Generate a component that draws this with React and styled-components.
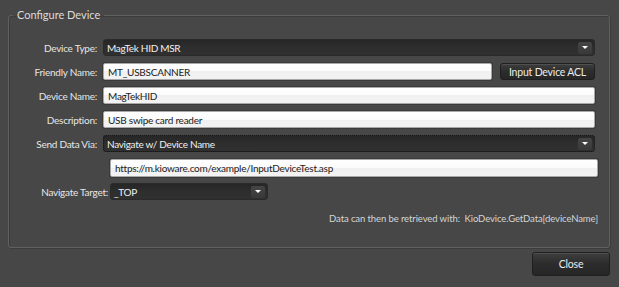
import styled, { createGlobalStyle } from "styled-components";

const GlobalStyle = createGlobalStyle`
  html, body {
    margin: 0;
    padding: 0;
    background: #474747;
  }
  body {
    width: 619px;
    height: 287px;
    overflow: hidden;
    font-family: Lato, "Open Sans", "Liberation Sans", sans-serif;
  }
`;

export default function App() {
  return (
    <Page>
      <GlobalStyle />
      <Group>
        <Title>Configure Device</Title>

        <Row>
          <Label>Device Type:</Label>
          <Select>
            <span>MagTek HID MSR</span>
            <Arrow />
          </Select>
        </Row>

        <Row>
          <Label>Friendly Name:</Label>
          <Input>MT_USBSCANNER</Input>
          <Button $width="95px">Input Device ACL</Button>
        </Row>

        <Row>
          <Label>Device Name:</Label>
          <Input>MagTekHID</Input>
        </Row>

        <Row>
          <Label>Description:</Label>
          <Input>USB swipe card reader</Input>
        </Row>

        <Row>
          <Label>Send Data Via:</Label>
          <Select $focused>
            <span>Navigate w/ Device Name</span>
            <Arrow />
          </Select>
        </Row>

        <UrlRow>
          <Input $tall>https://m.kioware.com/example/InputDeviceTest.asp</Input>
        </UrlRow>

        <Row>
          <Label $width="99px" $gap="2px">Navigate Target:</Label>
          <Select $width="158px">
            <span>_TOP</span>
            <Arrow />
          </Select>
        </Row>

        <Note>Data can then be retrieved with:&nbsp; KioDevice.GetData[deviceName]</Note>
      </Group>

      <Footer>
        <Button $width="78px" $height="24px">Close</Button>
      </Footer>
    </Page>
  );
}

const Page = styled.div`
  width: 619px;
  height: 287px;
  box-sizing: border-box;
  padding-top: 7px;
  display: flex;
  flex-direction: column;
`;

const Group = styled.fieldset`
  margin: 0 0 0 8px;
  width: 602px;
  box-sizing: border-box;
  padding: 16px 14px 21px 0;
  border: 1px solid #606060;
  border-radius: 3px;
  box-shadow: inset 1px 1px 0 #3c3c3c, 1px 1px 0 #3c3c3c;
  min-width: 0;
`;

const Title = styled.legend`
  margin-left: 4px;
  padding: 0 4px;
  font-size: 11px;
  line-height: 16px;
  color: #dcdcdc;
`;

const Row = styled.div`
  display: flex;
  align-items: center;
  height: 17px;
  margin-bottom: 7px;
`;

const UrlRow = styled.div`
  display: flex;
  height: 18px;
  margin: 1px -3px 6px 101px;
`;

const Label = styled.div`
  width: ${(p) => p.$width || "88px"};
  flex-shrink: 0;
  margin-right: ${(p) => p.$gap || "6px"};
  text-align: right;
  font-size: 10px;
  letter-spacing: -0.25px;
  color: #e6e6e6;
  white-space: nowrap;
`;

const Select = styled.div`
  display: flex;
  align-items: center;
  height: 17px;
  box-sizing: border-box;
  ${(p) => (p.$width ? `width: ${p.$width};` : "flex: 1;")}
  padding: 0 2px 0 3px;
  background: linear-gradient(#262626, #2e2e2e 50%, #303030);
  border: 1px ${(p) => (p.$focused ? "dotted #161616" : "solid #2a2a2a")};
  border-radius: 3px;
  font-size: 10px;
  letter-spacing: -0.3px;
  color: #f0f0f0;

  span {
    flex: 1;
    white-space: nowrap;
  }
`;

const Arrow = styled.div`
  width: 14px;
  height: 12px;
  border-radius: 2px;
  background: linear-gradient(#454545, #393939);
  display: flex;
  align-items: center;
  justify-content: center;

  &::after {
    content: "";
    border-left: 3px solid transparent;
    border-right: 3px solid transparent;
    border-top: 3px solid #ffffff;
  }
`;

const Input = styled.div`
  flex: 1;
  height: ${(p) => (p.$tall ? "18px" : "17px")};
  box-sizing: border-box;
  display: flex;
  align-items: center;
  padding-left: 4px;
  background: linear-gradient(#ffffff, #fbfbfb 50%, #f0f0f0 50%, #f3f3f3);
  border: 1px solid #a8a8a8;
  border-radius: 2px;
  box-shadow: 0 0 0 1px #3a3a3a;
  font-size: 10px;
  letter-spacing: -0.25px;
  color: #1c1c1c;
  white-space: nowrap;
`;

const Button = styled.div`
  width: ${(p) => p.$width};
  height: ${(p) => p.$height || "17px"};
  margin-left: 8px;
  box-sizing: border-box;
  display: flex;
  align-items: center;
  justify-content: center;
  background: linear-gradient(#3e3e3e, #2c2c2c 50%, #262626);
  border: 1px solid #1f1f1f;
  border-radius: 3px;
  box-shadow: inset 0 1px 0 #505050;
  font-size: 10.5px;
  letter-spacing: -0.2px;
  color: #ececec;
  flex-shrink: 0;
`;

const Note = styled.div`
  margin: 12px -3px 0 0;
  text-align: right;
  font-size: 9.5px;
  letter-spacing: -0.1px;
  line-height: 14px;
  color: #d6d6d6;
`;

const Footer = styled.div`
  display: flex;
  justify-content: flex-end;
  padding: 4px 9px 0 0;
`;
